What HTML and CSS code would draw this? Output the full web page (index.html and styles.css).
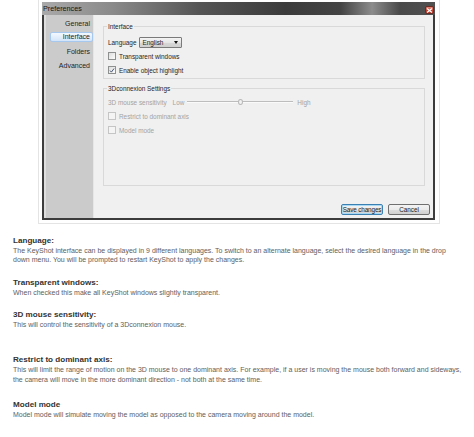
FILE: index.html
```html
<!DOCTYPE html>
<html>
<head>
<meta charset="utf-8">
<link rel="stylesheet" href="styles.css">
</head>
<body>
<div class="shot">
  <div class="win">
    <div class="titlebar">
      <span class="title">Preferences</span>
      <span class="close"><svg width="7" height="5" viewBox="0 0 7 5"><path d="M1 0.5 L6 4.5 M6 0.5 L1 4.5" stroke="#fff" stroke-width="1.2"/></svg></span>
    </div>
    <div class="client">
      <nav class="side">
        <div class="nav-item">General</div>
        <div class="nav-item sel">Interface</div>
        <div class="nav-item">Folders</div>
        <div class="nav-item">Advanced</div>
      </nav>
      <div class="content">
        <fieldset class="grp g1">
          <legend>Interface</legend>
          <div class="row">
            <span class="lbl">Language</span>
            <span class="combo"><span class="combo-text">English</span><span class="arrow"></span></span>
          </div>
          <div class="row"><span class="cb"></span>Transparent windows</div>
          <div class="row"><span class="cb"><svg width="7" height="7" viewBox="0 0 7 7"><path d="M1.2 3.6 L2.8 5.4 L5.9 1.2" fill="none" stroke="#3a4a6a" stroke-width="1.1"/></svg></span>Enable object highlight</div>
        </fieldset>
        <fieldset class="grp g2">
          <legend>3Dconnexion Settings</legend>
          <div class="row dis">
            <span class="lbl">3D mouse sensitivity</span>
            <span class="lo">Low</span>
            <span class="track"><span class="handle"></span></span>
            <span class="hi">High</span>
          </div>
          <div class="row dis"><span class="cb off"></span>Restrict to dominant axis</div>
          <div class="row dis"><span class="cb off"></span>Model mode</div>
        </fieldset>
        <div class="buttons">
          <span class="btn default">Save changes</span>
          <span class="btn">Cancel</span>
        </div>
      </div>
    </div>
  </div>
</div>

<div class="doc">
  <div class="sec first">
    <div class="h">Language:</div>
    <div class="d">The KeyShot interface can be displayed in 9 different languages. To switch to an alternate language, select the desired language in the drop<br>down menu. You will be prompted to restart KeyShot to apply the changes.</div>
  </div>
  <div class="sec">
    <div class="h">Transparent windows:</div>
    <div class="d">When checked this make all KeyShot windows slightly transparent.</div>
  </div>
  <div class="sec">
    <div class="h">3D mouse sensitivity:</div>
    <div class="d">This will control the sensitivity of a 3Dconnexion mouse.</div>
  </div>
  <div class="sec far">
    <div class="h">Restrict to dominant axis:</div>
    <div class="d">This will limit the range of motion on the 3D mouse to one dominant axis. For example, if a user is moving the mouse both forward and sideways, the camera will move in the more dominant direction - not both at the same time.</div>
  </div>
  <div class="sec last">
    <div class="h">Model mode</div>
    <div class="d">Model mode will simulate moving the model as opposed to the camera moving around the model.</div>
  </div>
</div>
</body>
</html>
```
FILE: styles.css
```css
body {
  margin: 0;
  background: #fff;
  font-family: "Liberation Sans", Arial, sans-serif;
}

.shot {
  margin-left: 38px;
  width: 402px;
  height: 224px;
  box-sizing: border-box;
  border: 1px solid #e4e4e4;
  border-top: 0;
  padding: 2px 0 0 3px;
}

.win {
  width: 393px;
  height: 218px;
  display: flex;
  flex-direction: column;
}

.titlebar {
  height: 13px;
  flex: none;
  display: flex;
  align-items: center;
  justify-content: space-between;
  background: linear-gradient(90deg, #a9a9a9 0%, #8a8a8a 18%, #555 40%, #3b3b3b 62%, #444 76%, #8c8c8c 84%, #4a4a4a 91%, #505050 100%);
  padding: 0 1px 0 1px;
}

.title {
  font-size: 7.2px;
  color: #141414;
  line-height: 13px;
}

.close {
  width: 9px;
  height: 8px;
  margin-top: 3px;
  background: linear-gradient(#e58c80, #c4402e 55%, #b33222);
  border: 1px solid #6b2a22;
  border-radius: 2px;
  box-sizing: border-box;
  display: flex;
  align-items: center;
  justify-content: center;
}

.client {
  flex: 1;
  display: flex;
  border: 2px solid #3c3c3c;
  border-top: 0;
  background: #f0f0f0;
}

.side {
  width: 50px;
  flex: none;
  box-sizing: border-box;
  background: #cbcbcb;
  border-left: 2px solid #dedede;
  border-right: 1px solid #e6e6e6;
  padding: 3px 0 0 4px;
}

.nav-item {
  height: 10px;
  line-height: 10px;
  font-size: 7px;
  color: #1e1e1e;
  text-align: right;
  padding-right: 2px;
  margin-bottom: 4px;
  box-sizing: border-box;
  border: 1px solid transparent;
  border-radius: 2px;
}

.nav-item.sel {
  background: linear-gradient(#f3f8fe, #d3e5fa);
  border-color: #a7c8ee;
  line-height: 8px;
}

.content {
  flex: 1;
  display: flex;
  flex-direction: column;
  padding: 7px 3px 3px 9px;
  font-size: 6.4px;
  color: #1e1e1e;
}

.grp {
  margin: 0 5px 0 0;
  border: 1px solid #d9d9d9;
  padding: 4px 0 1px 4px;
  min-width: 0;
}

.grp legend {
  font-size: 6.4px;
  line-height: 9px;
  padding: 0 1px;
  margin-left: -1px;
  color: #1e1e1e;
}

.g2 {
  margin-top: 5px;
  padding-top: 2px;
  flex: 1;
}

.row {
  height: 14px;
  display: flex;
  align-items: center;
}

.dis {
  color: #a3a3a3;
}

.lbl {
  margin-right: 3px;
}

.combo {
  width: 43px;
  height: 11px;
  box-sizing: border-box;
  border: 1px solid #7a7a7a;
  border-radius: 1px;
  background: linear-gradient(#f4f4f4, #e6e6e6 50%, #d8d8d8 51%, #cfcfcf);
  display: flex;
  align-items: center;
  justify-content: space-between;
  padding: 0 3px 0 2px;
}

.arrow {
  width: 0;
  height: 0;
  border-left: 2.5px solid transparent;
  border-right: 2.5px solid transparent;
  border-top: 3px solid #111;
}

.cb {
  width: 8px;
  height: 8px;
  flex: none;
  box-sizing: border-box;
  border: 1px solid #8e8f8f;
  background: linear-gradient(135deg, #dcdcdc, #fdfdfd);
  margin-right: 3px;
  display: flex;
  align-items: center;
  justify-content: center;
}

.cb.off {
  border-color: #c5c5c5;
  background: #f4f4f4;
}

.lo {
  margin-left: 3px;
}

.track {
  width: 106px;
  height: 1px;
  margin-left: 3px;
  background: #bdbdbd;
  border-bottom: 1px solid #fafafa;
  display: flex;
  align-items: center;
  justify-content: center;
}

.handle {
  width: 5px;
  height: 6px;
  box-sizing: border-box;
  border: 1px solid #b8b8b8;
  border-radius: 50%;
  background: #f2f2f2;
}

.hi {
  margin-left: 4px;
}

.buttons {
  display: flex;
  justify-content: flex-end;
  gap: 5px;
  margin-top: 18px;
}

.btn {
  width: 42px;
  height: 11px;
  box-sizing: border-box;
  border: 1px solid #707070;
  border-radius: 2px;
  background: linear-gradient(#f3f3f3, #ebebeb 50%, #dddddd 51%, #d0d0d0);
  font-size: 6.3px;
  line-height: 9px;
  text-align: center;
  white-space: nowrap;
  color: #1a1a1a;
}

.btn.default {
  border-color: #3c7fb1;
  box-shadow: inset 0 0 0 1px #a6d9f6;
  letter-spacing: -0.1px;
}

.doc {
  padding: 0 10px 0 13px;
}

.sec {
  margin-top: 13px;
}

.sec.first {
  margin-top: 11.5px;
}

.sec.far {
  margin-top: 25.5px;
}

.sec.last {
  margin-top: 16px;
}

.h {
  font-weight: bold;
  font-size: 8.1px;
  line-height: 10px;
  color: #333;
}

.d {
  font-size: 7px;
  line-height: 9.5px;
  color: #5e5e5e;
}
```
